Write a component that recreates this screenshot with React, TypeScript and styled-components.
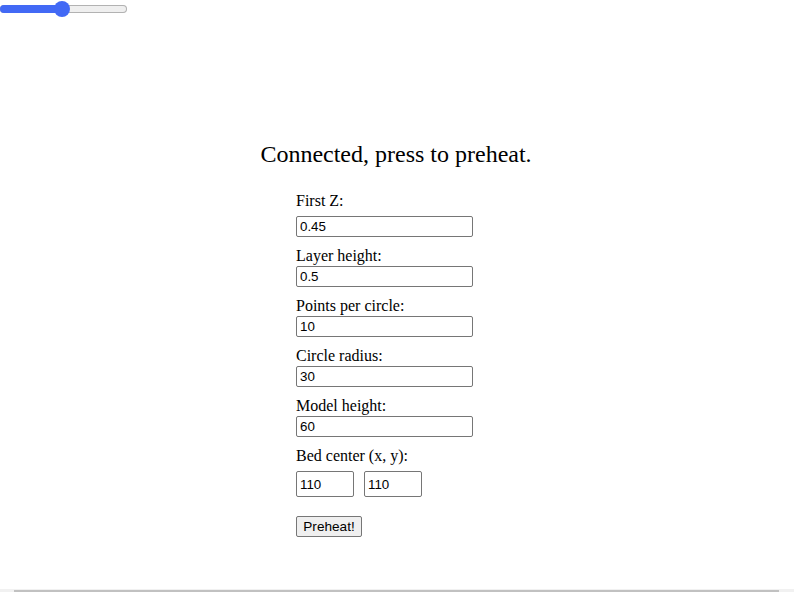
import React from "react";
import styled, { createGlobalStyle } from "styled-components";

const Global = createGlobalStyle`
  html, body { margin: 0; padding: 0; background: #ffffff; }
  body { font-family: "Liberation Serif", "Times New Roman", serif; color: #000; overflow: hidden; }
`;

const SliderWrap = styled.div`
  position: relative;
  width: 127px;
  height: 18px;
`;

const Track = styled.div`
  position: absolute;
  left: 0;
  right: 0;
  top: 5px;
  height: 8px;
  border-radius: 4px;
  background: #efefef;
  box-shadow: inset 0 0 0 1px #b2b2b2;
`;

const Fill = styled.div`
  position: absolute;
  left: 0;
  top: 5px;
  height: 8px;
  border-radius: 4px;
  background: #4269f5;
`;

const Thumb = styled.div`
  position: absolute;
  top: 1px;
  width: 16px;
  height: 16px;
  border-radius: 50%;
  background: #4269f5;
  transform: translateX(-50%);
`;

const Page = styled.div`
  display: flex;
  flex-direction: column;
  align-items: center;
`;

const Heading = styled.h1`
  margin: 122px 0 0 -2px;
  font-size: 24px;
  line-height: 28px;
  font-weight: normal;
`;

const Form = styled.form`
  width: 202px;
  display: flex;
  flex-direction: column;
  margin-top: 24px;
`;

const Group = styled.div<{ $first?: boolean }>`
  display: flex;
  flex-direction: column;
  gap: ${(p) => (p.$first ? "6px" : "1px")};
  margin-bottom: 10px;
`;

const Label = styled.label`
  font-size: 16px;
  line-height: 18px;
`;

const TextInput = styled.input<{ $w: number; $h: number }>`
  box-sizing: border-box;
  width: ${(p) => p.$w}px;
  height: ${(p) => p.$h}px;
  margin: 0;
  padding: 1px 3px;
  border: 1px solid #767676;
  border-radius: 2px;
  font-family: "Liberation Sans", Arial, sans-serif;
  font-size: 13.33px;
  color: #000;
  background: #fff;
  outline: none;
`;

const PairRow = styled.div`
  display: flex;
  gap: 10px;
  margin-top: 5px;
`;

const Button = styled.button`
  align-self: flex-start;
  box-sizing: border-box;
  width: 66px;
  height: 21px;
  margin-top: 9px;
  padding: 0;
  border: 1px solid #767676;
  border-radius: 2px;
  background: #efefef;
  font-family: "Liberation Sans", Arial, sans-serif;
  font-size: 13.6px;
  color: #000;
`;

const Scrollbar = styled.div`
  position: fixed;
  left: 0;
  right: 0;
  bottom: 0;
  height: 3px;
  background: #f1f1f1;
  display: flex;
  padding: 1px 15px 0 14px;
  box-sizing: border-box;
`;

const ScrollThumb = styled.div`
  flex: 1;
  background: #c1c1c1;
`;

const fields: { label: string; value: string }[] = [
  { label: "First Z:", value: "0.45" },
  { label: "Layer height:", value: "0.5" },
  { label: "Points per circle:", value: "10" },
  { label: "Circle radius:", value: "30" },
  { label: "Model height:", value: "60" },
];

export default function App() {
  const pct = 0.49;
  return (
    <>
      <Global />
      <SliderWrap>
        <Track />
        <Fill style={{ width: `${pct * 127}px` }} />
        <Thumb style={{ left: `${pct * 127}px` }} />
      </SliderWrap>
      <Page>
        <Heading>Connected, press to preheat.</Heading>
        <Form onSubmit={(e) => e.preventDefault()}>
          {fields.map((f, i) => (
            <Group key={f.label} $first={i === 0}>
              <Label>{f.label}</Label>
              <TextInput $w={177} $h={21} defaultValue={f.value} />
            </Group>
          ))}
          <Group>
            <Label>Bed center (x, y):</Label>
            <PairRow>
              <TextInput $w={58} $h={26} defaultValue="110" />
              <TextInput $w={58} $h={26} defaultValue="110" />
            </PairRow>
          </Group>
          <Button type="button">Preheat!</Button>
        </Form>
      </Page>
      <Scrollbar>
        <ScrollThumb />
      </Scrollbar>
    </>
  );
}
